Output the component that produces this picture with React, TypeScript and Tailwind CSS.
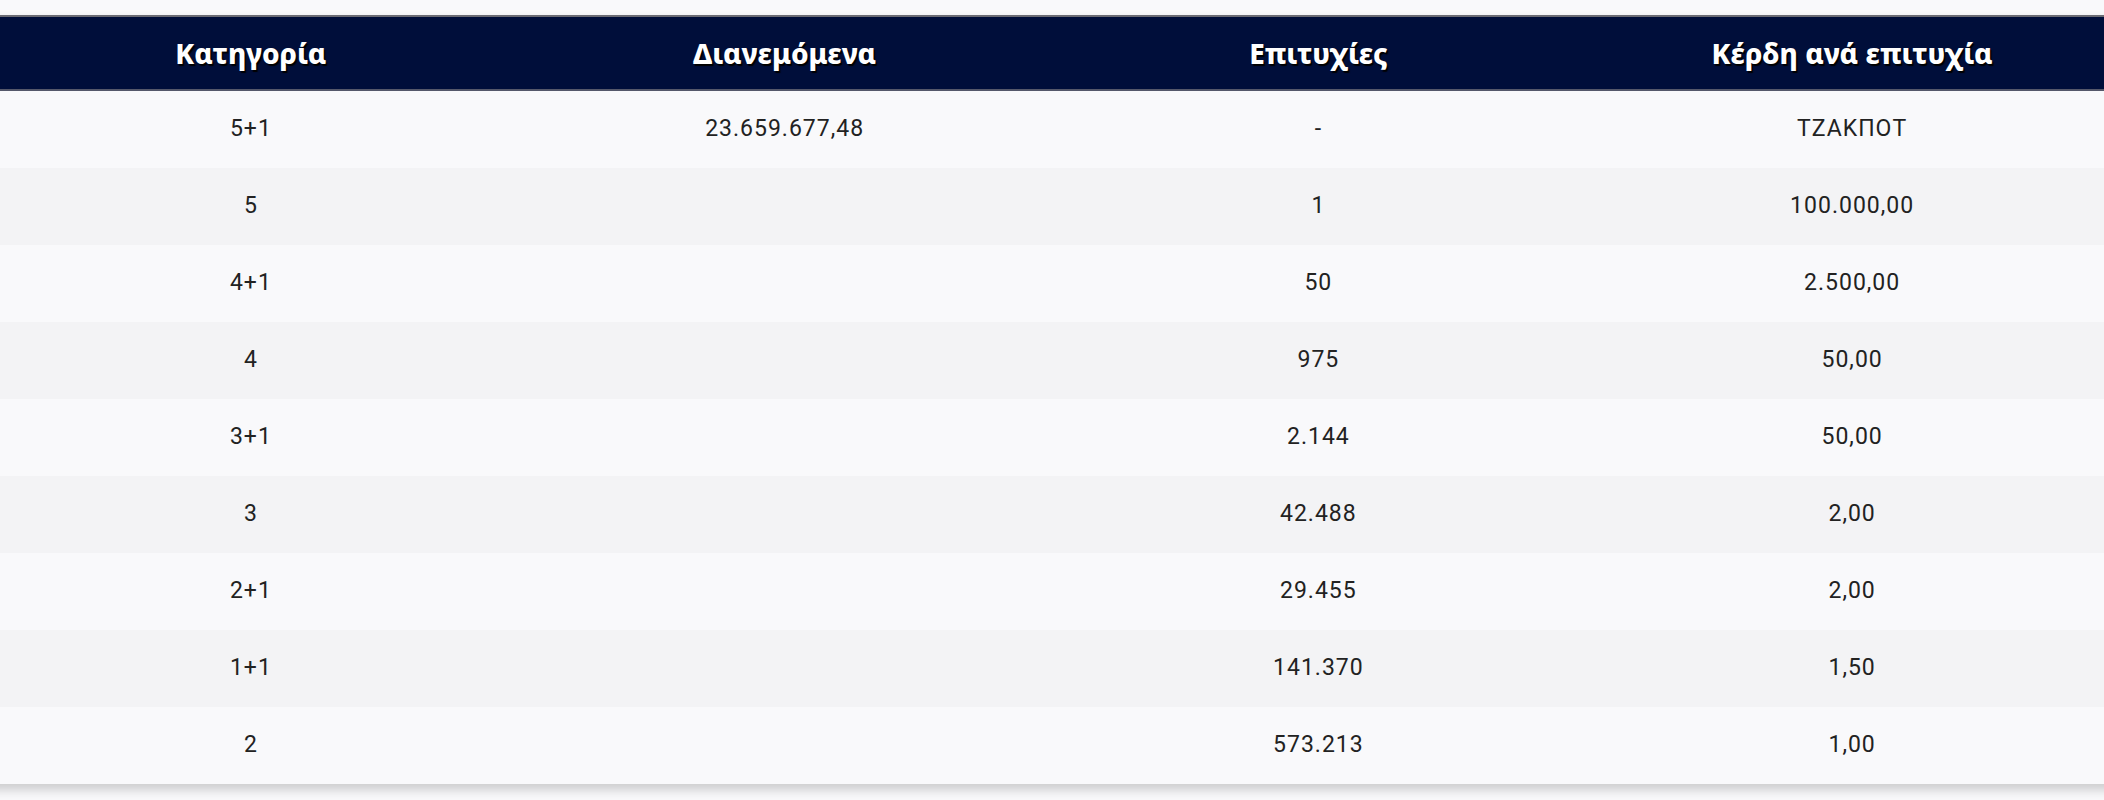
type Row = {
  category: string
  distributed: string
  winners: string
  prize: string
}

const rows: Row[] = [
  { category: "5+1", distributed: "23.659.677,48", winners: "-", prize: "ΤΖΑΚΠΟΤ" },
  { category: "5", distributed: "", winners: "1", prize: "100.000,00" },
  { category: "4+1", distributed: "", winners: "50", prize: "2.500,00" },
  { category: "4", distributed: "", winners: "975", prize: "50,00" },
  { category: "3+1", distributed: "", winners: "2.144", prize: "50,00" },
  { category: "3", distributed: "", winners: "42.488", prize: "2,00" },
  { category: "2+1", distributed: "", winners: "29.455", prize: "2,00" },
  { category: "1+1", distributed: "", winners: "141.370", prize: "1,50" },
  { category: "2", distributed: "", winners: "573.213", prize: "1,00" },
]

const headers = ["Κατηγορία", "Διανεμόμενα", "Επιτυχίες", "Κέρδη ανά επιτυχία"]

export default function App() {
  return (
    <div className="h-[800px] overflow-hidden bg-[#f9f9fb] pt-[15px] font-['Roboto','Liberation_Sans',sans-serif]">
      <div className="-ml-[16px] w-[2135px] shadow-[0_6px_10px_rgba(0,0,0,0.18)]">
        <div className="grid h-[76px] grid-cols-4 items-center border-t-2 border-b-2 border-t-[#6b6b73] border-b-[#55586a] bg-[#000e3a]">
          {headers.map((h) => (
            <div
              key={h}
              className="text-center font-['Noto_Sans',sans-serif] text-[28px] font-extrabold text-white [text-shadow:1.5px_1.5px_1px_#000]"
            >
              {h}
            </div>
          ))}
        </div>
        {rows.map((row, i) => (
          <div
            key={row.category + i}
            className={
              "grid h-[77px] grid-cols-4 items-center text-center text-[23px] tracking-[1px] text-[#222] " +
              (i % 2 === 0 ? "bg-[#f9f9fb]" : "bg-[#f3f3f5]")
            }
          >
            <div>{row.category}</div>
            <div>{row.distributed}</div>
            <div>{row.winners}</div>
            <div>{row.prize}</div>
          </div>
        ))}
      </div>
    </div>
  )
}
